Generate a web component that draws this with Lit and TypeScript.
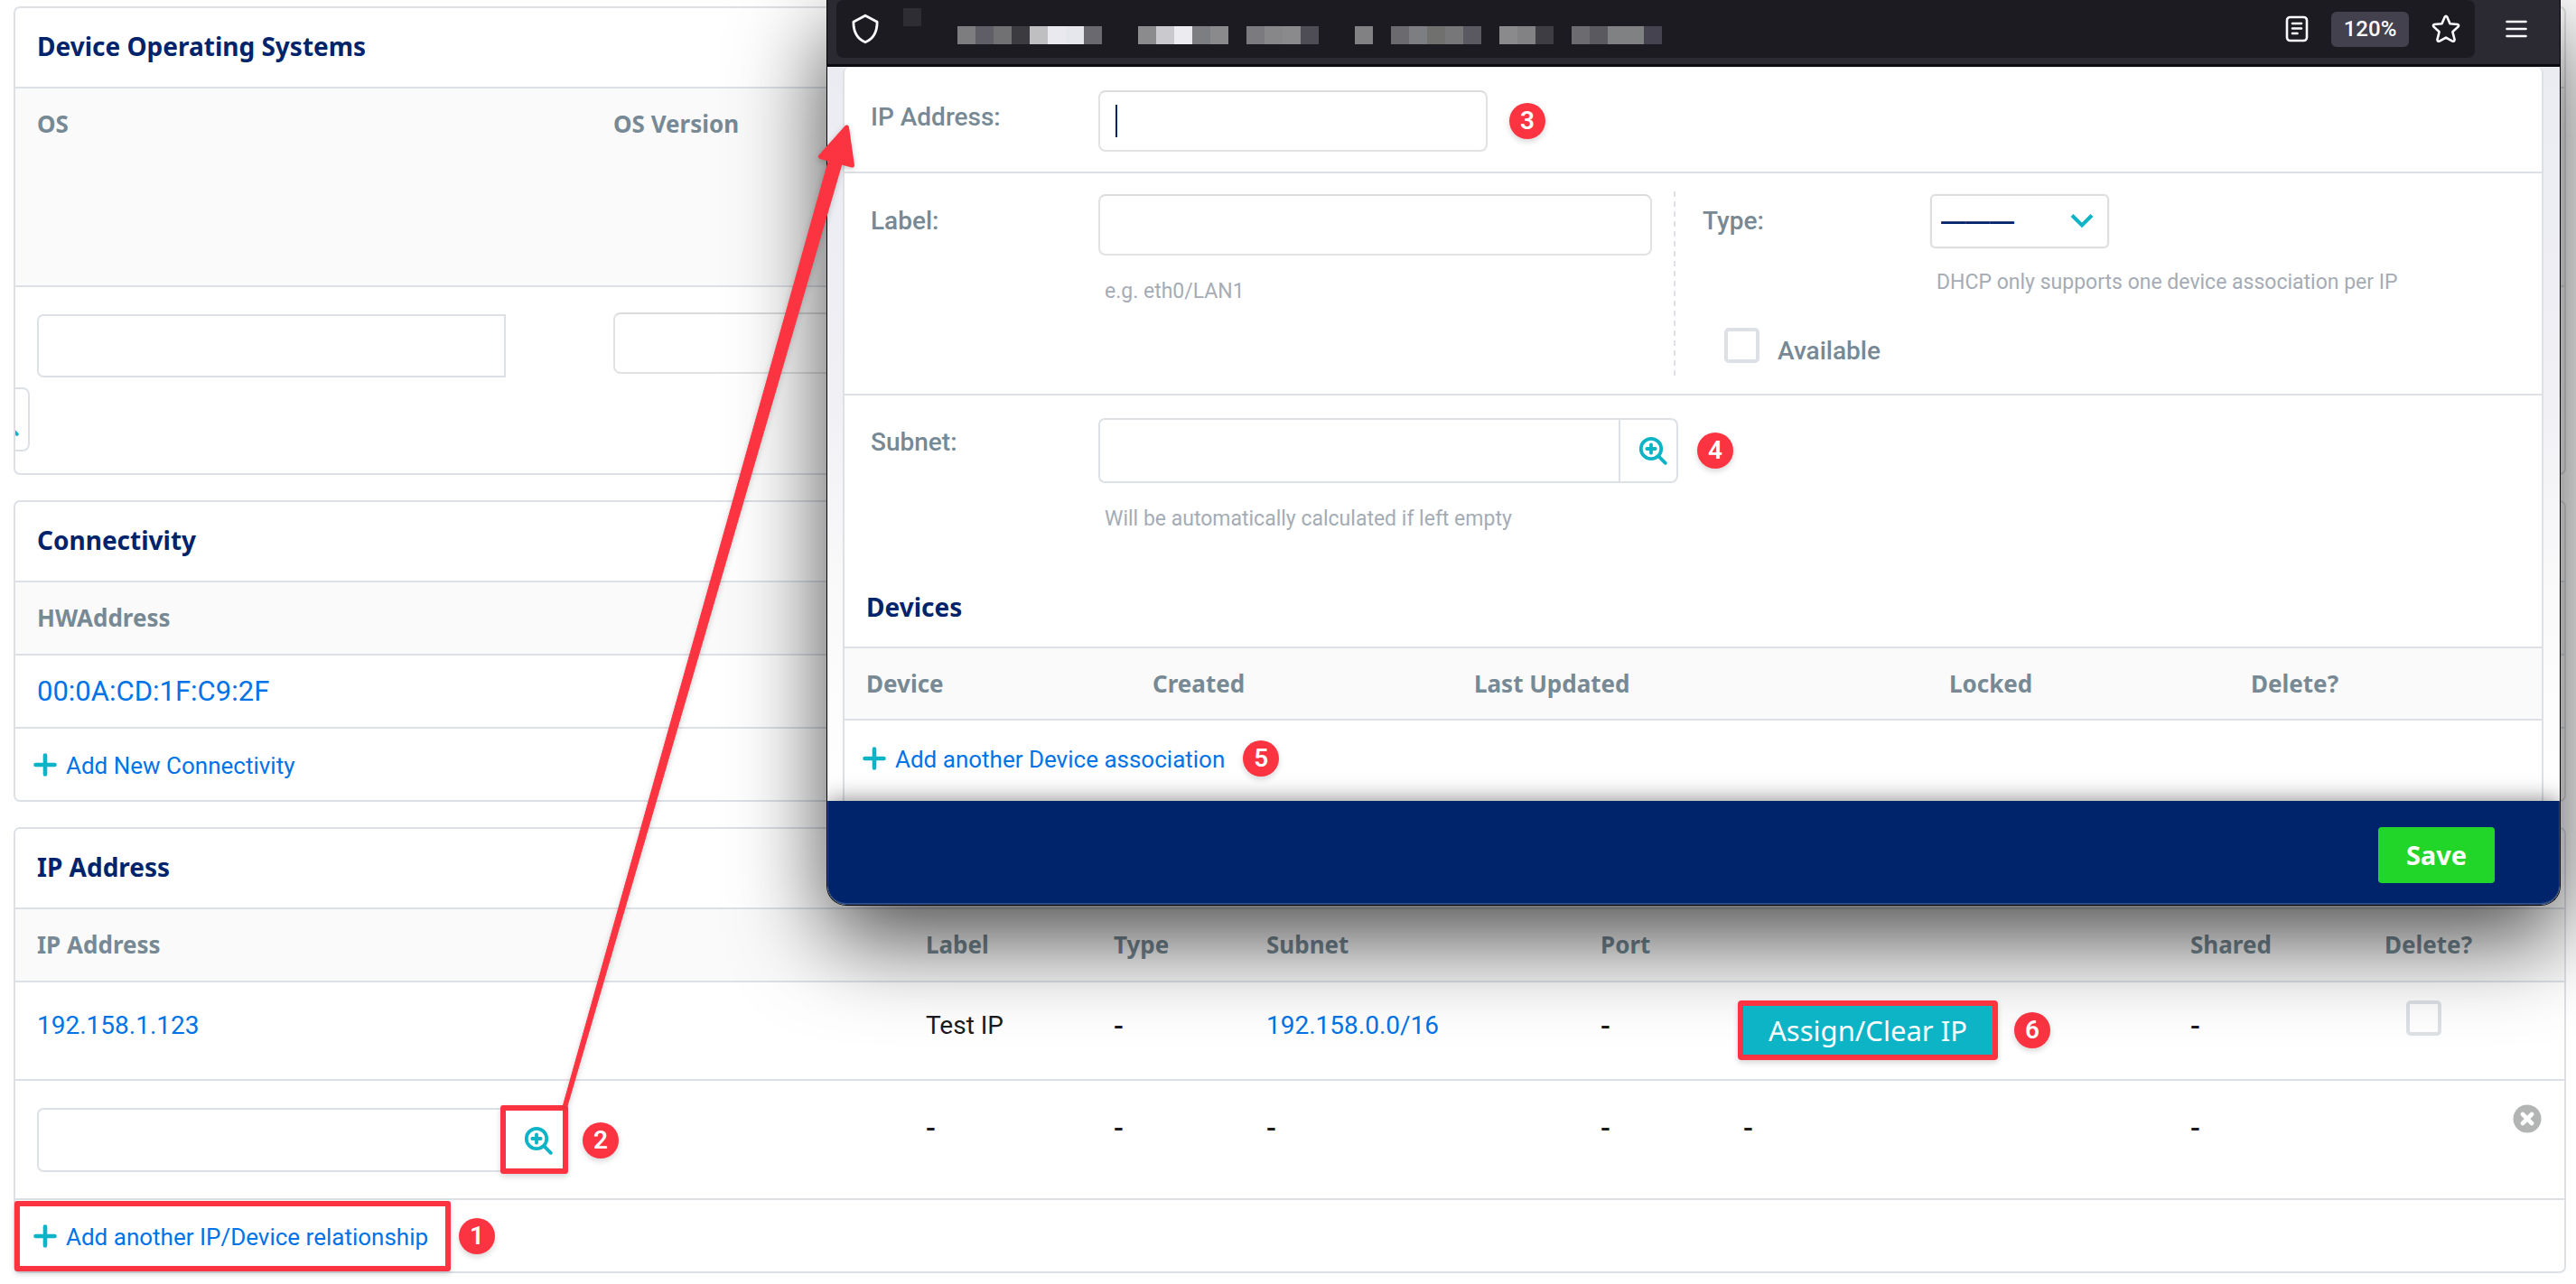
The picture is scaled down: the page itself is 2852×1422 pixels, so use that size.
import { LitElement, html, css, svg } from "lit";
import { customElement } from "lit/decorators.js";

const sharedStyles = css`
  *, *::before, *::after { box-sizing: border-box; }
  a { color: #0073e6; text-decoration: none; }
  button, input, select { font: inherit; margin: 0; }
  svg { display: block; flex: none; }
  .heading {
    margin: 0;
    padding: 0 24px;
    border-bottom: 2px solid #dde1e6;
    font: 700 28px/85px "Noto Sans", sans-serif;
    color: #00246b;
    height: 89px;
  }
  table { width: 100%; border-collapse: separate; border-spacing: 0; table-layout: fixed; }
  th, td { padding: 0 0 0 24px; text-align: left; vertical-align: top; white-space: nowrap; }
  th {
    height: 81px;
    border-bottom: 2px solid #dde1e6;
    background: #f9faf9;
    font: 700 26px/78px "Noto Sans", sans-serif;
    color: #768994;
  }
  .text-input {
    display: block;
    height: 68px;
    border: 2px solid #e0e2e4;
    border-top-color: #d9dbdd;
    border-radius: 8px;
    background: #fff;
    padding: 0 16px;
    outline: none;
  }
  .group { display: flex; }
  .group input {
    flex: 1;
    min-width: 0;
    border: 2px solid #dde1e6;
    border-right: 0;
    border-radius: 7px 0 0 7px;
    background: #fff;
    padding: 0 16px;
    outline: none;
  }
  .lookup {
    display: flex;
    align-items: center;
    justify-content: center;
    padding: 0;
    border: 2px solid #dde1e6;
    border-radius: 0 8px 8px 0;
    background: #fff;
    color: #0cb4c6;
  }
  .add { display: flex; align-items: center; gap: 10px; font-size: 26px; line-height: 32px; }
  .add span { padding-top: 3px; }
  .check {
    appearance: none;
    display: block;
    flex: none;
    width: 39px;
    height: 39px;
    border: 4px solid #dde1e6;
    border-radius: 5px;
    background: #fff;
  }
`;

const plusIcon = svg`<svg width="26" height="26" viewBox="0 0 26 26" fill="none" stroke="#0cb4c6" stroke-width="4.600" stroke-linecap="round"><path d="M13 2.500v21M2.500 13h21"/></svg>`;

const lookupIcon = svg`<svg width="32" height="32" viewBox="0 0 32 32" fill="none" stroke="#0cb4c6" stroke-width="3.800" stroke-linecap="round"><circle cx="14" cy="14" r="11.200"/><path d="M14 9.300v9.400M9.300 14h9.400M22.400 22.400l7.400 7.400"/></svg>`;

@customElement("step-badge")
class StepBadge extends LitElement {
  static styles = css`
    :host {
      display: grid;
      place-items: center;
      flex: none;
      width: 40px;
      height: 40px;
      border-radius: 50%;
      background: #fc3442;
      color: #fff;
      font: 600 28px/40px Roboto, sans-serif;
      box-shadow: 0 3px 6px rgba(0, 0, 0, 0.16);
    }
  `;
  render() {
    return html`<slot></slot>`;
  }
}

const PIXELS: string[][] = [
  ["#7d7d80", "#5f5d65", "#717174", "#3c3b40", "#bfbfc2", "#e9e9ef", "#e6e7ec", "#6a6970"],
  ["", ""],
  ["#8b8b8d", "#cacace", "#ececf0", "#7d7e81", "#8a8a8c"],
  [""],
  ["#7b7a7e", "#878789", "#8a8a8c", "#4e4c54"],
  ["", ""],
  ["#818183"],
  [""],
  ["#6b6a6f", "#7d7e81", "#70706f", "#77777a", "#5a5860"],
  [""],
  ["#8a8a8c", "#828284", "#3e3d44"],
  [""],
  ["#6c6b6f", "#5a5960", "#808183", "#808183", "#454350"],
];

@customElement("browser-bar")
class BrowserBar extends LitElement {
  static styles = css`
    *, *::before { box-sizing: border-box; }
    :host { display: block; }
    .bar {
      display: flex;
      height: 74px;
      padding: 0 10px;
      background: #2b2a33;
      border-bottom: 3px solid #0c0c10;
    }
    .url {
      flex: 1;
      display: flex;
      align-items: center;
      height: 64px;
      padding: 0 16px;
      border-radius: 8px;
      background: #1c1b22;
      color: #fbfbfe;
    }
    svg { display: block; }
    .chip { width: 20px; height: 20px; margin: 9px 40px 0 26px; align-self: flex-start; background: #2e2d33; }
    .pixels { display: flex; flex: 1; margin-top: 14px; }
    .cell { width: 20px; height: 20px; }
    button { display: block; padding: 0; border: 0; background: none; color: #fbfbfe; }
    .tools { display: flex; align-items: center; gap: 25px; }
    .zoom {
      width: 86px;
      height: 39px;
      border-radius: 6px;
      background: #42414d;
      font: 500 24px/39px Roboto, sans-serif;
    }
    .menu { align-self: center; margin: 0 26px 8px 34px; }
  `;
  render() {
    return html`
      <div class="bar">
        <div class="url">
          <svg width="32" height="34" viewBox="0 0 32 34" fill="none" stroke="#fbfbfe" stroke-width="2.800" stroke-linejoin="round"><path d="M16 2.200 2.900 9.200C2.900 19 6 27.600 16 31.800 26 27.600 29.100 19 29.100 9.200Z"/></svg>
          <div class="chip"></div>
          <div class="pixels">
            ${PIXELS.flat().map((c) => html`<span class="cell" style="background:${c || "transparent"}"></span>`)}
          </div>
          <div class="tools">
            <button aria-label="Reader view">
              <svg width="26" height="30" viewBox="0 0 26 30" fill="none" stroke="currentColor" stroke-width="2.600" stroke-linecap="round"><rect x="2" y="2" width="22" height="26" rx="3.500"/><path d="M8 9h10M8 14.500h10M8 20h5.500"/></svg>
            </button>
            <button class="zoom">120%</button>
            <button aria-label="Bookmark">
              <svg width="32" height="32" viewBox="0 0 32 32" fill="none" stroke="currentColor" stroke-width="2.600" stroke-linejoin="round"><path d="M14.700 2.800Q16 .9 17.300 2.800L20.500 10.200 28.800 11Q31 11.700 29.500 13.600L23.400 19.300 25.600 27.800Q25.500 30.300 23.200 29.700L16 25.600 8.800 29.700Q6.500 30.300 6.400 27.800L8.600 19.300 2.500 13.600Q1 11.700 3.200 11L11.500 10.200Z"/></svg>
            </button>
          </div>
        </div>
        <button class="menu" aria-label="Menu">
          <svg width="24" height="20" viewBox="0 0 24 20" fill="none" stroke="currentColor" stroke-width="2.600" stroke-linecap="round"><path d="M1.500 2h21M1.500 10h21M1.500 18h21"/></svg>
        </button>
      </div>
    `;
  }
}

@customElement("ip-window")
class IpWindow extends LitElement {
  static styles = [
    sharedStyles,
    css`
      :host { display: block; font: 28px/40px Roboto, sans-serif; }
      .window {
        overflow: hidden;
        border: 1px solid #000;
        border-top: 0;
        border-radius: 0 0 22px 22px;
        background: #fff;
        box-shadow: 0 36px 100px rgba(0, 0, 0, 0.7);
      }
      .content { padding: 1px 18px 0 17px; background: linear-gradient(#ebecf2, #efeff4 40%, #f9f9fa 70%, #fff); }
      .panel { border: solid #dde1e6; border-width: 0 2px; border-radius: 6px 6px 0 0; background: #fff; }
      .row { display: grid; grid-template-columns: 918fr 961fr; border-bottom: 2px solid #dde1e6; }
      .row.address { height: 117px; }
      .row.label { height: 246px; }
      .row.subnet { height: 193px; border-bottom: 0; }
      .field { display: flex; align-items: flex-start; padding: 23px 0 0 29px; }
      .row.address .field, .row.subnet .field { padding-top: 25px; }
      .field.second { padding-left: 32px; }
      .name { flex: none; width: 252px; height: 60px; font-weight: 500; line-height: 60px; color: #768994; }
      .line { display: flex; align-items: center; }
      .hint { margin-top: 24px; font-size: 23px; line-height: 32px; color: #a5acb5; padding-left: 7px; white-space: nowrap; }
      .ip { position: relative; margin-right: 24px; }
      .ip .text-input { width: 431px; }
      .caret { position: absolute; left: 19px; top: 16px; width: 2px; height: 36px; background: #00246b; }
      .label-input { width: 613px; }
      .divided { position: relative; }
      .divided::before {
        content: "";
        position: absolute;
        left: 0;
        top: 20px;
        bottom: 20px;
        width: 2px;
        background: repeating-linear-gradient(#dde1e6 0 6px, transparent 6px 11px);
      }
      .select { position: relative; width: 198px; }
      select {
        display: block;
        appearance: none;
        width: 198px;
        height: 60px;
        padding: 0 0 0 10px;
        border: 2px solid #dcdee0;
        border-radius: 6px;
        background: #fff;
        color: #00246b;
        font: 700 27px/54px "Liberation Sans", sans-serif;
        box-shadow: 0 0 2px rgba(0, 0, 0, 0.1);
      }
      .chevron { position: absolute; right: 17px; top: 21px; pointer-events: none; }
      .second .hint { margin-top: 22px; }
      .available { display: flex; gap: 20px; padding: 34px 0 0 56px; }
      .available label { font-weight: 500; line-height: 40px; color: #768994; padding-top: 6px; }
      .group { width: 642px; height: 72px; margin-right: 21px; }
      .lookup { width: 66px; padding-left: 10px; }
      .row.subnet .name { line-height: 54px; }
      .heading { height: 87px; line-height: 82px; }
      th { height: 80px; }
      .add-row { display: flex; align-items: center; gap: 20px; height: 89px; padding: 0 20px 6px; }
      .footer {
        position: relative;
        display: flex;
        justify-content: flex-end;
        height: 115px;
        padding: 29px 71px 0 0;
        background: #00246b;
        border: solid #2d4b86;
        border-width: 0 1px 2px;
        border-radius: 0 0 21px 21px;
        box-shadow: 0 0 26px rgba(0, 0, 0, 0.5);
      }
      .save {
        width: 129px;
        height: 62px;
        border: 0;
        border-radius: 4px;
        background: #22d629;
        color: #fff;
        font: 700 29px/58px "Noto Sans", sans-serif;
      }
      .c-created { width: 356px; }
      .c-updated { width: 526px; }
      .c-locked { width: 334px; }
      .c-delete { width: 346px; }
    `,
  ];
  render() {
    return html`
      <div class="window">
        <browser-bar></browser-bar>
        <div class="content">
          <div class="panel">
            <div class="row address">
              <div class="field">
                <label class="name" for="ip">IP Address:</label>
                <div class="line">
                  <div class="ip"><input class="text-input" id="ip" type="text" /><span class="caret"></span></div>
                  <step-badge>3</step-badge>
                </div>
              </div>
            </div>
            <div class="row label">
              <div class="field">
                <label class="name" for="label">Label:</label>
                <div>
                  <input class="text-input label-input" id="label" type="text" />
                  <div class="hint">e.g. eth0/LAN1</div>
                </div>
              </div>
              <div class="divided">
                <div class="field second">
                  <label class="name" for="type">Type:</label>
                  <div>
                    <div class="select">
                      <select id="type"><option>———</option></select>
                      <svg class="chevron" width="26" height="18" viewBox="0 0 26 18" fill="none" stroke="#0cb4c6" stroke-width="4"><path d="M2 2.500 13 13.500 24 2.500"/></svg>
                    </div>
                    <div class="hint">DHCP only supports one device association per IP</div>
                  </div>
                </div>
                <div class="available">
                  <input class="check" id="available" type="checkbox" />
                  <label for="available">Available</label>
                </div>
              </div>
            </div>
            <div class="row subnet">
              <div class="field">
                <label class="name" for="subnet">Subnet:</label>
                <div>
                  <div class="line">
                    <div class="group">
                      <input id="subnet" type="text" />
                      <button class="lookup" aria-label="Look up subnet">${lookupIcon}</button>
                    </div>
                    <step-badge>4</step-badge>
                  </div>
                  <div class="hint">Will be automatically calculated if left empty</div>
                </div>
              </div>
            </div>
            <h2 class="heading">Devices</h2>
            <table>
              <colgroup>
                <col /><col class="c-created" /><col class="c-updated" /><col class="c-locked" /><col class="c-delete" />
              </colgroup>
              <thead>
                <tr><th>Device</th><th>Created</th><th>Last Updated</th><th>Locked</th><th>Delete?</th></tr>
              </thead>
            </table>
            <div class="add-row">
              <a class="add" href="#">${plusIcon}<span>Add another Device association</span></a>
              <step-badge>5</step-badge>
            </div>
          </div>
        </div>
        <div class="footer"><button class="save">Save</button></div>
      </div>
    `;
  }
}

@customElement("app-root")
class AppRoot extends LitElement {
  static styles = [
    sharedStyles,
    css`
      :host { display: block; font: 28px/40px Roboto, sans-serif; color: #1b1b1d; background: #fff; }
      .page { position: relative; display: flex; flex-direction: column; gap: 28px; padding: 7px 11px 12px 15px; }
      .panel { border: 2px solid #dde1e6; border-radius: 7px; background: #fff; }
      .clipped { overflow: hidden; }
      .os th { height: 220px; }
      .os td { height: 206px; }
      .os-field { width: 519px; height: 70px; margin-top: 30px; border: 2px solid #dde1e6; border-radius: 7px 0 0 7px; }
      .version-field { width: 518px; margin-top: 28px; }
      .wrapped { width: 64px; height: 71px; margin: 11px 0 0 -72px; padding: 4px 0 0 8px; }
      .c-os { width: 638px; }
      .mac { height: 81px; border-bottom: 2px solid #dde1e6; font-size: 31px; line-height: 79px; }
      .add-row { display: flex; align-items: center; height: 79px; padding-left: 20px; }
      .ips td { border-bottom: 2px solid #dde1e6; }
      .saved td { height: 109px; padding-top: 28px; }
      .blank td { height: 132px; padding-top: 32px; }
      .saved .tight { padding-top: 20px; }
      .blank .top { padding-top: 30px; }
      .blank .remove-cell { padding: 26px 25px 0 0; }
      .c-label { width: 208px; }
      .c-type { width: 169px; }
      .c-subnet { width: 370px; }
      .c-port { width: 158px; }
      .c-action { width: 495px; }
      .c-shared { width: 215px; }
      .c-delete { width: 223px; }
      .assign-line { display: flex; align-items: center; gap: 18px; margin-left: -6px; }
      .assign-box { position: relative; z-index: 2; border: 6px solid #fc3442; border-radius: 4px; box-shadow: 0 3px 6px rgba(0, 0, 0, 0.16); }
      .assign {
        display: block;
        width: 276px;
        height: 54px;
        padding: 0;
        border: 0;
        background: #0cb4c6;
        color: #fff;
        font: 400 31px/52px "Noto Sans", sans-serif;
      }
      .delete { margin-left: 24px; }
      .dash { font-weight: 500; font-size: 32px; }
      .picker { display: flex; align-items: center; gap: 17px; }
      .picker .group { position: relative; width: 587px; height: 71px; }
      .picker .lookup { width: 66px; border-left: 0; padding-left: 4px; }
      .picker .group::after {
        content: "";
        position: absolute;
        right: -1px;
        top: -3px;
        width: 75px;
        height: 76px;
        border: 6px solid #fc3442;
        border-radius: 3px;
        box-shadow: 0 3px 6px rgba(0, 0, 0, 0.16);
        pointer-events: none;
      }
      .remove-line { display: flex; justify-content: flex-end; }
      .remove { padding: 0; border: 0; background: none; }
      .marked { display: flex; align-items: center; gap: 9px; height: 79px; margin-left: -1px; }
      .marked-box { height: 78px; padding: 0 19px 0 15px; display: flex; align-items: center; border: 6px solid #fc3442; border-radius: 3px; box-shadow: 0 3px 6px rgba(0, 0, 0, 0.16); }
      ip-window { position: absolute; z-index: 1; top: 0; left: 915px; right: 17px; }
      .arrow { position: absolute; z-index: 3; left: 600px; top: 120px; pointer-events: none; filter: drop-shadow(0 2px 3px rgba(0, 0, 0, 0.2)); }
    `,
  ];

  render() {
    const dash = html`<td class="dash">-</td>`;
    return html`
      <div class="page">
        <section class="panel clipped os">
          <h2 class="heading">Device Operating Systems</h2>
          <table>
            <colgroup><col class="c-os" /><col /></colgroup>
            <thead><tr><th>OS</th><th>OS Version</th></tr></thead>
            <tbody>
              <tr>
                <td>
                  <input class="text-input os-field" type="text" aria-label="OS" />
                  <button class="lookup wrapped" aria-label="Look up OS">${lookupIcon}</button>
                </td>
                <td><input class="text-input version-field" type="text" aria-label="OS Version" /></td>
              </tr>
            </tbody>
          </table>
        </section>

        <section class="panel">
          <h2 class="heading">Connectivity</h2>
          <table>
            <thead><tr><th>HWAddress</th></tr></thead>
            <tbody><tr><td class="mac"><a href="#">00:0A:CD:1F:C9:2F</a></td></tr></tbody>
          </table>
          <div class="add-row"><a class="add" href="#">${plusIcon}<span>Add New Connectivity</span></a></div>
        </section>

        <section class="panel ips">
          <h2 class="heading">IP Address</h2>
          <table>
            <colgroup>
              <col /><col class="c-label" /><col class="c-type" /><col class="c-subnet" /><col class="c-port" />
              <col class="c-action" /><col class="c-shared" /><col class="c-delete" />
            </colgroup>
            <thead>
              <tr><th>IP Address</th><th>Label</th><th>Type</th><th>Subnet</th><th>Port</th><th></th><th>Shared</th><th>Delete?</th></tr>
            </thead>
            <tbody>
              <tr class="saved">
                <td><a href="#">192.158.1.123</a></td>
                <td>Test IP</td>
                ${dash}
                <td><a href="#">192.158.0.0/16</a></td>
                ${dash}
                <td class="tight">
                  <div class="assign-line">
                    <div class="assign-box"><button class="assign">Assign/Clear IP</button></div>
                    <step-badge>6</step-badge>
                  </div>
                </td>
                ${dash}
                <td class="tight"><input class="check delete" type="checkbox" aria-label="Delete 192.158.1.123" /></td>
              </tr>
              <tr class="blank">
                <td class="top">
                  <div class="picker">
                    <div class="group">
                      <input type="text" aria-label="IP Address" />
                      <button class="lookup" aria-label="Look up IP address">${lookupIcon}</button>
                    </div>
                    <step-badge>2</step-badge>
                  </div>
                </td>
                ${dash}${dash}${dash}${dash}${dash}${dash}
                <td class="remove-cell">
                  <div class="remove-line">
                    <button class="remove" aria-label="Remove row">
                      <svg width="32" height="32" viewBox="0 0 32 32"><circle cx="16" cy="16" r="15.500" fill="#b3b5b4"/><path d="M11 11l10 10M21 11l-10 10" stroke="#fff" stroke-width="4.600" stroke-linecap="round"/></svg>
                    </button>
                  </div>
                </td>
              </tr>
            </tbody>
          </table>
          <div class="marked">
            <div class="marked-box"><a class="add" href="#">${plusIcon}<span>Add another IP/Device relationship</span></a></div>
            <step-badge>1</step-badge>
          </div>
        </section>

        <ip-window></ip-window>

        <svg class="arrow" width="360" height="1120" viewBox="600 120 360 1120" fill="#fc3442" stroke="#fc3442" stroke-linejoin="round">
          <path stroke-width="1" d="M623.500 1224 918.500 174 933 178 628 1225Z"/>
          <path stroke-width="5" d="M937.500 141 908.500 173.500 943.500 183Z"/>
        </svg>
      </div>
    `;
  }
}
